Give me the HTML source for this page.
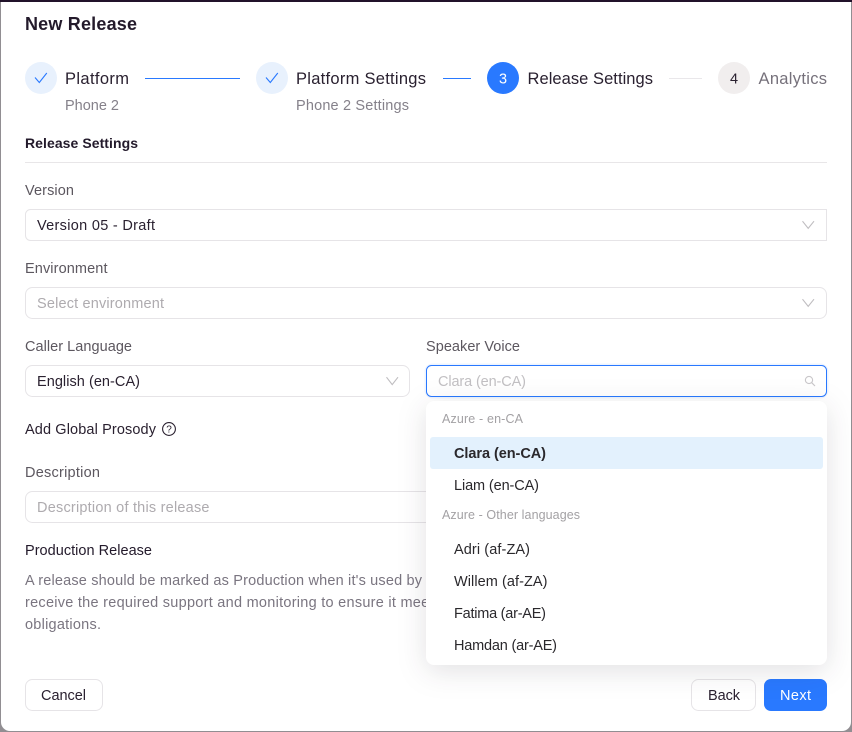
<!DOCTYPE html>
<html lang="en">
<head>
<meta charset="utf-8">
<title>New Release</title>
<style>
html,body{margin:0;padding:0;width:852px;height:732px;overflow:hidden;background:#918e92}
svg{display:block;position:absolute;left:0;top:0}
text{font-family:"Liberation Sans",Arial,sans-serif;font-size:14.5px;fill:#2a2130;white-space:pre}
.h{font-weight:700}
.lb{fill:#5c575f}
.ph{fill:#aeabaf}
.sub{fill:#85818a}
.body{fill:#7a7580}
.s{font-size:16.5px}
.g{font-size:12.5px;fill:#a3a1a4}
.o{fill:#2a282c}
.box{fill:#fff;stroke:#e6e4e7;stroke-width:1}
.chev{fill:none;stroke:#bfbdc0;stroke-width:1.1}
.ck{fill:none;stroke:#2979ff;stroke-width:1.1}
</style>
</head>
<body>
<svg width="852" height="732" viewBox="0 0 852 732" xmlns="http://www.w3.org/2000/svg">
  <rect x="0" y="0" width="852" height="732" fill="#918e92"/>
  <rect x="0" y="0" width="852" height="2" fill="#21122a"/>
  <path d="M1 2H851V722a9 9 0 0 1-9 9H10a9 9 0 0 1-9-9Z" fill="#fff"/>

  <text x="25" y="30" class="h" style="font-size:18px;fill:#231a2b" textLength="112" lengthAdjust="spacing">New Release</text>

  <!-- stepper -->
  <circle cx="41" cy="78" r="16" fill="#e8f1fd"/>
  <path class="ck" d="M35 77.5L39.3 82.5L46.8 73"/>
  <text x="65" y="84" class="s" textLength="64" lengthAdjust="spacing">Platform</text>
  <text x="65" y="110" class="sub" textLength="54" lengthAdjust="spacing">Phone 2</text>
  <rect x="145" y="78" width="95" height="1" fill="#2979ff"/>

  <circle cx="272" cy="78" r="16" fill="#e8f1fd"/>
  <path class="ck" d="M266 77.5L270.3 82.5L277.8 73"/>
  <text x="296" y="84" class="s" textLength="130" lengthAdjust="spacing">Platform Settings</text>
  <text x="296" y="110" class="sub" textLength="113" lengthAdjust="spacing">Phone 2 Settings</text>
  <rect x="443" y="78" width="28" height="1" fill="#2979ff"/>

  <circle cx="503" cy="78" r="16" fill="#2979ff"/>
  <text x="503" y="83.5" text-anchor="middle" style="fill:#fff;font-size:14.5px">3</text>
  <text x="527.5" y="84" class="s" textLength="125.5" lengthAdjust="spacing">Release Settings</text>
  <rect x="669" y="78" width="33" height="1" fill="#e9e7ea"/>

  <circle cx="734" cy="78" r="16" fill="#f1eeee"/>
  <text x="734" y="83.5" text-anchor="middle" style="font-size:14.5px">4</text>
  <text x="758.5" y="84" class="s" style="fill:#76717b" textLength="68.5" lengthAdjust="spacing">Analytics</text>

  <text x="25" y="148" class="h" style="font-size:14px;fill:#231a2b" textLength="113" lengthAdjust="spacing">Release Settings</text>
  <rect x="25" y="162" width="802" height="1" fill="#e8e6e8"/>

  <!-- version -->
  <text x="25" y="195" class="lb" textLength="49" lengthAdjust="spacing">Version</text>
  <path class="box" d="M30.5 209.5H826.5V240.5H30.5a5 5 0 0 1-5-5V214.5a5 5 0 0 1 5-5Z"/>
  <text x="37" y="230" textLength="118" lengthAdjust="spacing">Version 05 - Draft</text>
  <path class="chev" d="M802.5 221.2L808.2 228.4L814 221.2"/>

  <!-- environment -->
  <text x="25" y="273" class="lb" textLength="82.5" lengthAdjust="spacing">Environment</text>
  <rect class="box" x="25.5" y="287.5" width="801" height="31" rx="7"/>
  <text x="37" y="308" class="ph" textLength="127" lengthAdjust="spacing">Select environment</text>
  <path class="chev" d="M802.5 299.2L808.2 306.4L814 299.2"/>

  <!-- caller language -->
  <text x="25" y="351" class="lb" textLength="107" lengthAdjust="spacing">Caller Language</text>
  <rect class="box" x="25.5" y="365.5" width="384" height="31" rx="7"/>
  <text x="37" y="386" textLength="103" lengthAdjust="spacing">English (en-CA)</text>
  <path class="chev" d="M386.5 377.2L392.2 384.6L398 377.2"/>

  <!-- speaker voice -->
  <text x="426" y="351" class="lb" textLength="94" lengthAdjust="spacing">Speaker Voice</text>
  <rect x="424.5" y="363.5" width="404" height="35" rx="8" fill="#2979ff" opacity=".08"/>
  <rect x="426.5" y="365.5" width="400" height="31" rx="5" fill="#fff" stroke="#2979ff" stroke-width="1"/>
  <text x="438" y="386" style="fill:#c2c0c3" textLength="88" lengthAdjust="spacing">Clara (en-CA)</text>
  <circle cx="809" cy="380" r="3.6" fill="none" stroke="#c9c7ca" stroke-width="1.1"/>
  <path d="M811.7 382.7L815 386" fill="none" stroke="#c9c7ca" stroke-width="1.2"/>

  <!-- prosody -->
  <text x="25" y="434" textLength="131" lengthAdjust="spacing">Add Global Prosody</text>
  <circle cx="169" cy="429" r="6.4" fill="none" stroke="#2a2130" stroke-width="1.1"/>
  <text x="169" y="432.6" text-anchor="middle" style="font-size:10px">?</text>

  <!-- description -->
  <text x="25" y="477" class="lb" textLength="75" lengthAdjust="spacing">Description</text>
  <rect class="box" x="25.5" y="491.5" width="801" height="31" rx="7"/>
  <text x="37" y="512" class="ph" textLength="172.5" lengthAdjust="spacing">Description of this release</text>

  <text x="25" y="555" style="fill:#231a2b" textLength="127" lengthAdjust="spacing">Production Release</text>
  <text x="25" y="585" class="body" textLength="397" lengthAdjust="spacing">A release should be marked as Production when it's used by</text>
  <text x="25" y="607" class="body" textLength="416" lengthAdjust="spacing">receive the required support and monitoring to ensure it meets</text>
  <text x="25" y="629" class="body" textLength="76" lengthAdjust="spacing">obligations.</text>

  <!-- footer buttons -->
  <rect class="box" x="25.5" y="679.5" width="77" height="31" rx="7"/>
  <text x="41" y="700" textLength="45" lengthAdjust="spacing">Cancel</text>
  <rect class="box" x="691.5" y="679.5" width="64" height="31" rx="7"/>
  <text x="708" y="700" textLength="32" lengthAdjust="spacing">Back</text>
  <rect x="764" y="679" width="63" height="32" rx="7" fill="#2979ff"/>
  <text x="780" y="700" style="fill:#fff" textLength="31" lengthAdjust="spacing">Next</text>

  <!-- dropdown -->
  <rect x="426" y="401" width="401" height="264" rx="8" fill="#fff" style="filter:drop-shadow(0 6px 14px rgba(30,20,40,.13))"/>
  <text x="442" y="423" class="g" textLength="81" lengthAdjust="spacing">Azure - en-CA</text>
  <rect x="430" y="437" width="393" height="32" rx="3" fill="#e3f1fd"/>
  <text x="454" y="458" class="h o" textLength="92" lengthAdjust="spacing">Clara (en-CA)</text>
  <text x="454" y="490" class="o" textLength="85" lengthAdjust="spacing">Liam (en-CA)</text>
  <text x="442" y="519" class="g" textLength="138" lengthAdjust="spacing">Azure - Other languages</text>
  <text x="454" y="554" class="o" textLength="76" lengthAdjust="spacing">Adri (af-ZA)</text>
  <text x="454" y="586" class="o" textLength="93.5" lengthAdjust="spacing">Willem (af-ZA)</text>
  <text x="454" y="618" class="o" textLength="92" lengthAdjust="spacing">Fatima (ar-AE)</text>
  <text x="454" y="650" class="o" textLength="103" lengthAdjust="spacing">Hamdan (ar-AE)</text>
</svg>
</body>
</html>
